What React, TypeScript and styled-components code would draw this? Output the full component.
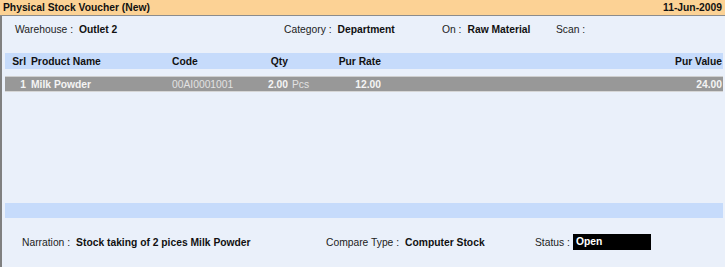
import React from "react";
import styled, { createGlobalStyle } from "styled-components";

const Global = createGlobalStyle`
  html, body { margin: 0; padding: 0; background: #eaf0fa; }
  body { font-family: "Liberation Sans", Arial, sans-serif; font-size: 10.3px; color: #111; }
  * { box-sizing: border-box; }
`;

const Window = styled.div`
  width: 725px;
  height: 267px;
  display: flex;
  flex-direction: column;
  background: #eaf0fa;
  overflow: hidden;
`;

const TitleBar = styled.div`
  height: 16px;
  flex: none;
  display: flex;
  justify-content: space-between;
  align-items: center;
  padding: 0 3px 1px 3px;
  background: #fcd295;
  border-bottom: 1px solid #8c8c8c;
  font-weight: bold;
  line-height: 15px;
`;

const Body = styled.div`
  flex: 1;
  display: flex;
  flex-direction: column;
  border-left: 2px solid #808080;
  padding: 0 2px 0 3px;
`;

const FieldRow = styled.div`
  height: 26px;
  display: flex;
  align-items: center;
  padding-left: 10px;
`;

const Field = styled.div<{ $w?: number; $gap?: number }>`
  display: flex;
  align-items: center;
  gap: ${(p) => p.$gap ?? 6}px;
  width: ${(p) => (p.$w ? `${p.$w}px` : "auto")};
  flex: none;
  white-space: nowrap;
`;

const Label = styled.span`
  color: #222;
`;

const Value = styled.span`
  font-weight: bold;
  color: #111;
`;

const GridRow = styled.div<{ $variant: "head" | "data" }>`
  display: grid;
  grid-template-columns: 21px 146px 76px 40px 50px 43px 1fr;
  height: 16px;
  align-items: center;
  padding-right: 1px;
  margin-top: ${(p) => (p.$variant === "head" ? "11px" : "7px")};
  background: ${(p) => (p.$variant === "head" ? "#c6dbfb" : "#989898")};
  color: ${(p) => (p.$variant === "head" ? "#111" : "#f4f4f4")};
  font-weight: bold;
  border-top: ${(p) => (p.$variant === "data" ? "1px solid #cfcfcf" : "none")};
  border-bottom: ${(p) => (p.$variant === "data" ? "1px solid #d6d6d6" : "none")};
  white-space: nowrap;
`;

const Cell = styled.span<{ $align?: "left" | "right"; $pad?: number; $light?: boolean }>`
  text-align: ${(p) => p.$align ?? "left"};
  padding-left: ${(p) => (p.$pad ? `${p.$pad}px` : "0")};
  font-weight: ${(p) => (p.$light ? "normal" : "bold")};
  color: ${(p) => (p.$light ? "#e2e2e2" : "inherit")};
`;

const Fill = styled.div`
  flex: 1;
`;

const BlueBar = styled.div`
  height: 15px;
  flex: none;
  background: #c6dbfb;
`;

const Footer = styled.div`
  height: 49px;
  flex: none;
  display: flex;
  align-items: flex-start;
  padding: 16px 0 0 17px;
`;

const FooterField = styled(Field)`
  height: 16px;
`;

const StatusBox = styled.span`
  width: 78px;
  height: 16px;
  background: #000;
  color: #fff;
  font-weight: bold;
  line-height: 16px;
  padding-left: 3px;
`;

export default function App() {
  return (
    <>
      <Global />
      <Window>
        <TitleBar>
          <span>Physical Stock Voucher (New)</span>
          <span>11-Jun-2009</span>
        </TitleBar>
        <Body>
          <FieldRow>
            <Field $w={269}>
              <Label>Warehouse :</Label>
              <Value>Outlet 2</Value>
            </Field>
            <Field $w={158}>
              <Label>Category :</Label>
              <Value>Department</Value>
            </Field>
            <Field $w={114}>
              <Label>On :</Label>
              <Value>Raw Material</Value>
            </Field>
            <Field>
              <Label>Scan :</Label>
            </Field>
          </FieldRow>
          <GridRow $variant="head">
            <Cell $align="right">Srl</Cell>
            <Cell $pad={5}>Product Name</Cell>
            <Cell>Code</Cell>
            <Cell $align="right">Qty</Cell>
            <Cell />
            <Cell $align="right">Pur Rate</Cell>
            <Cell $align="right">Pur Value</Cell>
          </GridRow>
          <GridRow $variant="data">
            <Cell $align="right">1</Cell>
            <Cell $pad={5}>Milk Powder</Cell>
            <Cell $light>00AI0001001</Cell>
            <Cell $align="right">2.00</Cell>
            <Cell $pad={4} $light>Pcs</Cell>
            <Cell $align="right">12.00</Cell>
            <Cell $align="right">24.00</Cell>
          </GridRow>
          <Fill />
          <BlueBar />
          <Footer>
            <FooterField $w={304}>
              <Label>Narration :</Label>
              <Value>Stock taking of 2 pices Milk Powder</Value>
            </FooterField>
            <FooterField $w={209}>
              <Label>Compare Type :</Label>
              <Value>Computer Stock</Value>
            </FooterField>
            <FooterField $gap={3}>
              <Label>Status :</Label>
              <StatusBox>Open</StatusBox>
            </FooterField>
          </Footer>
        </Body>
      </Window>
    </>
  );
}
